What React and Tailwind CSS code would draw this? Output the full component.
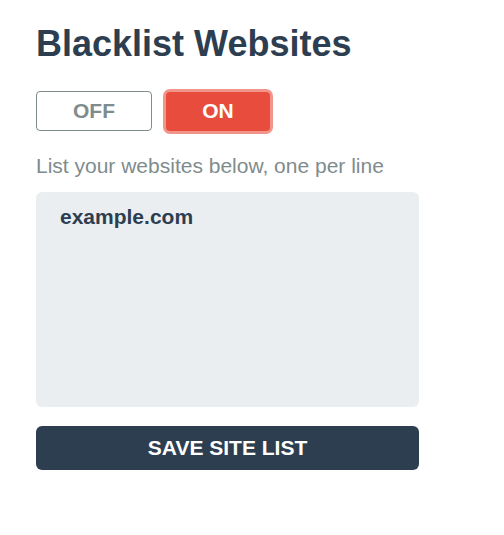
export default function App() {
  return (
    <div className="min-h-[535px] bg-white px-9 pt-6 font-['Liberation_Sans',Arial,sans-serif]">
      <h1 className="text-[36px] font-bold leading-[40px] text-[#2c3e50]">Blacklist Websites</h1>

      <div className="mt-[27px] flex items-center gap-[14px]">
        <button className="h-10 w-[116px] rounded border border-[#7f8c8d] bg-white text-[21px] font-bold text-[#7f8c8d]">
          OFF
        </button>
        <button className="h-[39px] w-[104px] rounded bg-[#e74c3c] text-[21px] font-bold text-white ring-3 ring-[#f1948a]">
          ON
        </button>
      </div>

      <p className="mt-[22px] text-[21px] leading-[26px] text-[#7f8c8d]">List your websites below, one per line</p>

      <textarea
        className="mt-[13px] block h-[215px] w-[383px] resize-none rounded-md bg-[#ebeef0] px-6 pt-[12px] text-[21px] font-bold leading-[26px] text-[#2c3e50] outline-none"
        defaultValue="example.com"
      />

      <button className="mt-[19px] h-[44px] w-[383px] rounded-md bg-[#2c3e50] text-[21px] font-bold text-white">
        SAVE SITE LIST
      </button>
    </div>
  );
}
